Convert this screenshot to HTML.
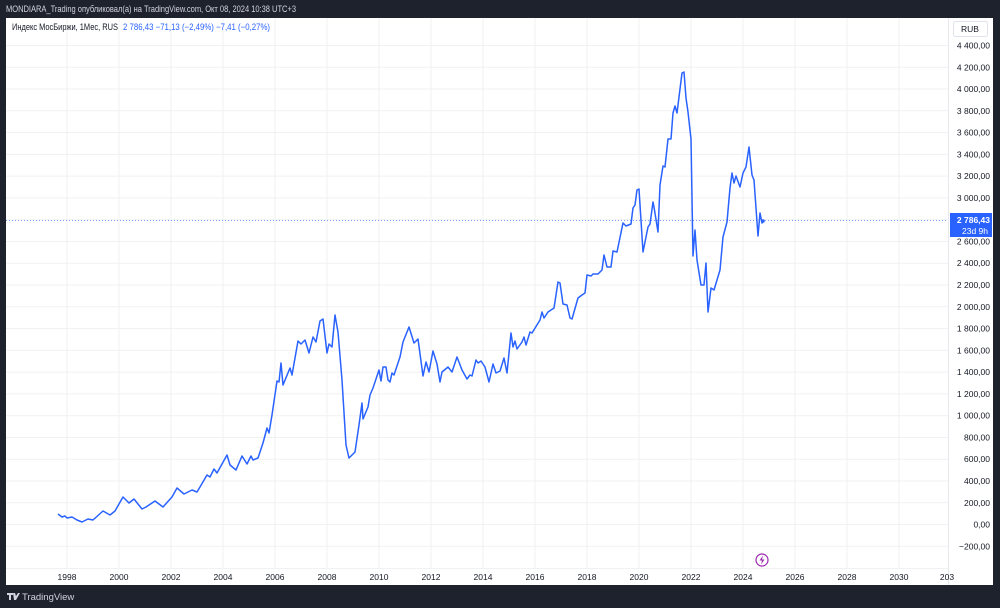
<!DOCTYPE html>
<html><head><meta charset="utf-8"><style>
html,body{margin:0;padding:0;background:#1e222d;width:1000px;height:608px;overflow:hidden;font-family:"Liberation Sans","DejaVu Sans",sans-serif}
svg{position:absolute;left:0;top:0}
</style></head><body>
<svg width="1000" height="608" viewBox="0 0 1000 608" xmlns="http://www.w3.org/2000/svg" font-family="Liberation Sans, DejaVu Sans, sans-serif">
<rect x="0" y="0" width="1000" height="608" fill="#1e222d"/>
<text x="6" y="12" font-size="9" fill="#d1d4dc" textLength="290" lengthAdjust="spacingAndGlyphs">MONDIARA_Trading опубликовал(а) на TradingView.com, Окт 08, 2024 10:38 UTC+3</text>
<rect x="6" y="18" width="987" height="567" fill="#ffffff"/>
<g stroke="#f0f1f3" stroke-width="1">
<line x1="6" x2="948" y1="45.5" y2="45.5"/><line x1="6" x2="948" y1="67.3" y2="67.3"/><line x1="6" x2="948" y1="89" y2="89"/><line x1="6" x2="948" y1="110.8" y2="110.8"/><line x1="6" x2="948" y1="132.6" y2="132.6"/><line x1="6" x2="948" y1="154.4" y2="154.4"/><line x1="6" x2="948" y1="176.1" y2="176.1"/><line x1="6" x2="948" y1="197.9" y2="197.9"/><line x1="6" x2="948" y1="219.7" y2="219.7"/><line x1="6" x2="948" y1="241.5" y2="241.5"/><line x1="6" x2="948" y1="263.2" y2="263.2"/><line x1="6" x2="948" y1="285" y2="285"/><line x1="6" x2="948" y1="306.8" y2="306.8"/><line x1="6" x2="948" y1="328.6" y2="328.6"/><line x1="6" x2="948" y1="350.3" y2="350.3"/><line x1="6" x2="948" y1="372.1" y2="372.1"/><line x1="6" x2="948" y1="393.9" y2="393.9"/><line x1="6" x2="948" y1="415.7" y2="415.7"/><line x1="6" x2="948" y1="437.4" y2="437.4"/><line x1="6" x2="948" y1="459.2" y2="459.2"/><line x1="6" x2="948" y1="481" y2="481"/><line x1="6" x2="948" y1="502.8" y2="502.8"/><line x1="6" x2="948" y1="524.5" y2="524.5"/><line x1="6" x2="948" y1="546.3" y2="546.3"/>
<line y1="18" y2="568" x1="67" x2="67"/><line y1="18" y2="568" x1="119" x2="119"/><line y1="18" y2="568" x1="171" x2="171"/><line y1="18" y2="568" x1="223" x2="223"/><line y1="18" y2="568" x1="275" x2="275"/><line y1="18" y2="568" x1="327" x2="327"/><line y1="18" y2="568" x1="379" x2="379"/><line y1="18" y2="568" x1="431" x2="431"/><line y1="18" y2="568" x1="483" x2="483"/><line y1="18" y2="568" x1="535" x2="535"/><line y1="18" y2="568" x1="587" x2="587"/><line y1="18" y2="568" x1="639" x2="639"/><line y1="18" y2="568" x1="691" x2="691"/><line y1="18" y2="568" x1="743" x2="743"/><line y1="18" y2="568" x1="795" x2="795"/><line y1="18" y2="568" x1="847" x2="847"/><line y1="18" y2="568" x1="899" x2="899"/>
</g>
<line x1="6" x2="948" y1="220.5" y2="220.5" stroke="#7b9cf5" stroke-width="1" stroke-dasharray="1 2"/>
<line x1="948.5" x2="948.5" y1="18" y2="585" stroke="#e8e9ec"/>
<line x1="6" x2="948" y1="568.5" y2="568.5" stroke="#f0f1f3"/>
<polyline fill="none" stroke="#2962ff" stroke-width="1.5" stroke-linejoin="round" points="58,514 62,517 65,516 67,518 72,517 77,520 82,522 88,519 93,520 103,511 110,515 115,511 119,504 123,497 129,503 134,499 142,509 146,507 155,501 163,507 172,497 177,488 184,494 192,490 197,492 200,487 207,475 210,477 214,469 217,473 227,455 230,465 236,470 242,456 247,464 251,456 253,460 258,458 263,443 267,428 269,433 272,415 277,381 279,382 281,363 283,385 290,368 292,375 298,341 301,344 305,340 309,353 313,337 316,342 320,321 323,319 327,353 329,344 332,347 335,315 338,332 342,380 346,445 349,458 355,452 359,425 362,403 363,419 368,407 370,395 373,388 379,370 381,381 383,367 386,367 388,380 390,382 392,373 394,375 400,357 403,342 409,327 414,343 418,339 423,376 426,362 429,372 433,351 437,364 440,382 442,372 448,367 452,372 457,357 462,370 467,379 470,375 472,376 476,360 478,363 481,361 485,367 489,382 493,364 496,373 500,371 504,358 507,373 511,333 513,347 515,341 517,349 522,342 524,337 526,345 530,332 532,333 540,320 542,312 544,318 548,312 554,308 558,282 560,283 563,304 567,305 570,318 572,319 578,298 582,295 585,293 587,275 591,276 593,274 598,274 602,270 604,255 607,267 611,267 613,251 617,252 623,223 626,226 631,224 633,208 635,205 637,190 639,189 643,252 648,227 650,224 653,202 654,207 658,232 660,185 663,166 665,167 668,139 671,139 673,113 675,106 677,113 682,73 684,72 686,98 688,112 691,139 693,256 695,230 697,260 701,285 704,285 706,263 708,312 711,288 714,290 717,280 720,270 723,237 727,222 730,188 732,173 734,183 736,176 740,187 743,173 746,167 749,147 752,175 754,180 758,236 760,213 762,223 763,221"/>
<circle cx="763" cy="221" r="1.8" fill="#2962ff"/>
<circle cx="762" cy="560" r="6" fill="none" stroke="#9c27b0" stroke-width="1.2"/>
<path d="M763 555.5 L759.5 560.5 L762 560.5 L761 564.5 L764.5 559.5 L762 559.5 Z" fill="#9c27b0"/>
<text x="12" y="30" font-size="9" fill="#131722" textLength="106" lengthAdjust="spacingAndGlyphs">Индекс МосБиржи, 1Мес, RUS</text>
<text x="123" y="30" font-size="9" fill="#2962ff" textLength="147" lengthAdjust="spacingAndGlyphs">2 786,43 −71,13 (−2,49%) −7,41 (−0,27%)</text>
<rect x="953.5" y="21.5" width="34" height="15" rx="2" fill="#fff" stroke="#e0e3eb"/>
<text x="970" y="32" font-size="8.5" fill="#131722" text-anchor="middle">RUB</text>
<g font-size="8.5" fill="#131722" text-anchor="end">
<text x="990" y="48.5">4 400,00</text><text x="990" y="70.3">4 200,00</text><text x="990" y="92">4 000,00</text><text x="990" y="113.8">3 800,00</text><text x="990" y="135.6">3 600,00</text><text x="990" y="157.4">3 400,00</text><text x="990" y="179.1">3 200,00</text><text x="990" y="200.9">3 000,00</text><text x="990" y="244.5">2 600,00</text><text x="990" y="266.2">2 400,00</text><text x="990" y="288">2 200,00</text><text x="990" y="309.8">2 000,00</text><text x="990" y="331.6">1 800,00</text><text x="990" y="353.3">1 600,00</text><text x="990" y="375.1">1 400,00</text><text x="990" y="396.9">1 200,00</text><text x="990" y="418.7">1 000,00</text><text x="990" y="440.4">800,00</text><text x="990" y="462.2">600,00</text><text x="990" y="484">400,00</text><text x="990" y="505.8">200,00</text><text x="990" y="527.5">0,00</text><text x="990" y="549.3">−200,00</text>
</g>
<rect x="950" y="213" width="42" height="24" fill="#2962ff"/>
<text x="990" y="223" font-size="8.5" fill="#fff" text-anchor="end" font-weight="bold">2 786,43</text>
<text x="988" y="234" font-size="8.5" fill="#fff" text-anchor="end">23d 9h</text>
<g font-size="8.5" fill="#131722" text-anchor="middle">
<text x="67" y="580">1998</text><text x="119" y="580">2000</text><text x="171" y="580">2002</text><text x="223" y="580">2004</text><text x="275" y="580">2006</text><text x="327" y="580">2008</text><text x="379" y="580">2010</text><text x="431" y="580">2012</text><text x="483" y="580">2014</text><text x="535" y="580">2016</text><text x="587" y="580">2018</text><text x="639" y="580">2020</text><text x="691" y="580">2022</text><text x="743" y="580">2024</text><text x="795" y="580">2026</text><text x="847" y="580">2028</text><text x="899" y="580">2030</text><text x="947" y="580">203</text>
</g>
<path d="M7 593 h6 v2 h-2 v5 h-2 v-5 h-2 z M13 593 h2 l1 3 2 -3 h2 l-4 7 h-2 z" fill="#d1d4dc"/>
<text x="22" y="600" font-size="9.5" fill="#d1d4dc">TradingView</text>
</svg>
</body></html>
